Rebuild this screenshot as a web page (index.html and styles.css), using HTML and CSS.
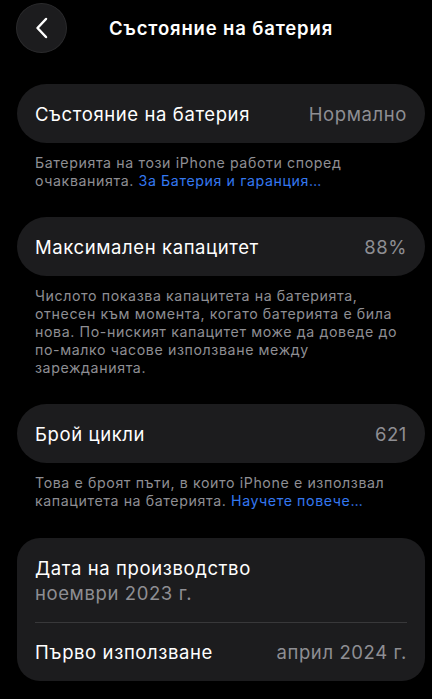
FILE: index.html
```html
<!DOCTYPE html>
<html lang="bg">
<head>
<meta charset="utf-8">
<link rel="stylesheet" href="styles.css">
</head>
<body>
<div class="screen">
  <header class="nav">
    <div class="back">
      <svg width="16" height="22" viewBox="0 0 16 22"><path d="M12 2 L3.5 11 L12 20" fill="none" stroke="#fff" stroke-width="2.5" stroke-linecap="round" stroke-linejoin="round"/></svg>
    </div>
    <div class="title">Състояние на батерия</div>
  </header>

  <section class="group">
    <div class="card pill">
      <span class="label">Състояние на батерия</span>
      <span class="value">Нормално</span>
    </div>
    <p class="note">Батерията на този iPhone работи според очакванията. <a class="link">За Батерия и гаранция…</a></p>
  </section>

  <section class="group">
    <div class="card pill">
      <span class="label">Максимален капацитет</span>
      <span class="value">88%</span>
    </div>
    <p class="note">Числото показва капацитета на батерията, отнесен към момента, когато батерията е била нова. По-ниският капацитет може да доведе до по-малко часове използване между зарежданията.</p>
  </section>

  <section class="group">
    <div class="card pill">
      <span class="label">Брой цикли</span>
      <span class="value">621</span>
    </div>
    <p class="note">Това е броят пъти, в които iPhone е използвал капацитета на батерията. <a class="link">Научете повече…</a></p>
  </section>

  <section class="card-list">
    <div class="row stacked">
      <span class="label">Дата на производство</span>
      <span class="value">ноември 2023 г.</span>
    </div>
    <div class="sep"></div>
    <div class="row">
      <span class="label">Първо използване</span>
      <span class="value">април 2024 г.</span>
    </div>
  </section>
</div>
</body>
</html>
```
FILE: styles.css
```css
* { box-sizing: border-box; }
html, body { margin: 0; padding: 0; background: #000; }
body {
  font-family: "Inter", "Noto Sans", sans-serif;
  color: #fff;
  width: 432px;
  height: 699px;
  overflow: hidden;
}
.screen { padding: 3px 7px 0 16px; }
.nav {
  display: flex;
  align-items: center;
  height: 50px;
  gap: 42px;
}
.back {
  width: 51px;
  height: 50px;
  border-radius: 50%;
  background: #1c1c1e;
  border: 1px solid #2a2a2c;
  display: flex;
  align-items: center;
  justify-content: center;
}
.title {
  font-size: 18.5px;
  font-weight: 600;
  letter-spacing: 0.85px;
}
.group { margin-top: 31px; }
.group + .group { margin-top: 27px; }
.card {
  background: #1c1c1e;
  display: flex;
  align-items: center;
  justify-content: space-between;
  height: 59px;
  margin-left: 1px;
  padding: 0 18px;
  font-size: 18.5px;
  letter-spacing: 0.6px;
}
.pill { border-radius: 30px; }
.label { color: #fff; }
.value { color: #8e8e93; }
.note {
  margin: 11px 0 0 1px;
  padding: 0 18px;
  font-size: 14.2px;
  line-height: 18px;
  letter-spacing: 0.6px;
  color: #8e8e93;
}
.link { color: #3478f0; }
.card-list {
  margin-top: 28px;
  margin-left: 1px;
  background: #1c1c1e;
  border-radius: 23px;
  padding: 0 18px;
  font-size: 18.5px;
  letter-spacing: 0.6px;
}
.row {
  display: flex;
  justify-content: space-between;
  align-items: center;
  height: 58px;
}
.row.stacked {
  flex-direction: column;
  align-items: flex-start;
  justify-content: center;
  height: 84px;
  gap: 3px;
}
.sep { height: 1px; background: #38383a; }
```
